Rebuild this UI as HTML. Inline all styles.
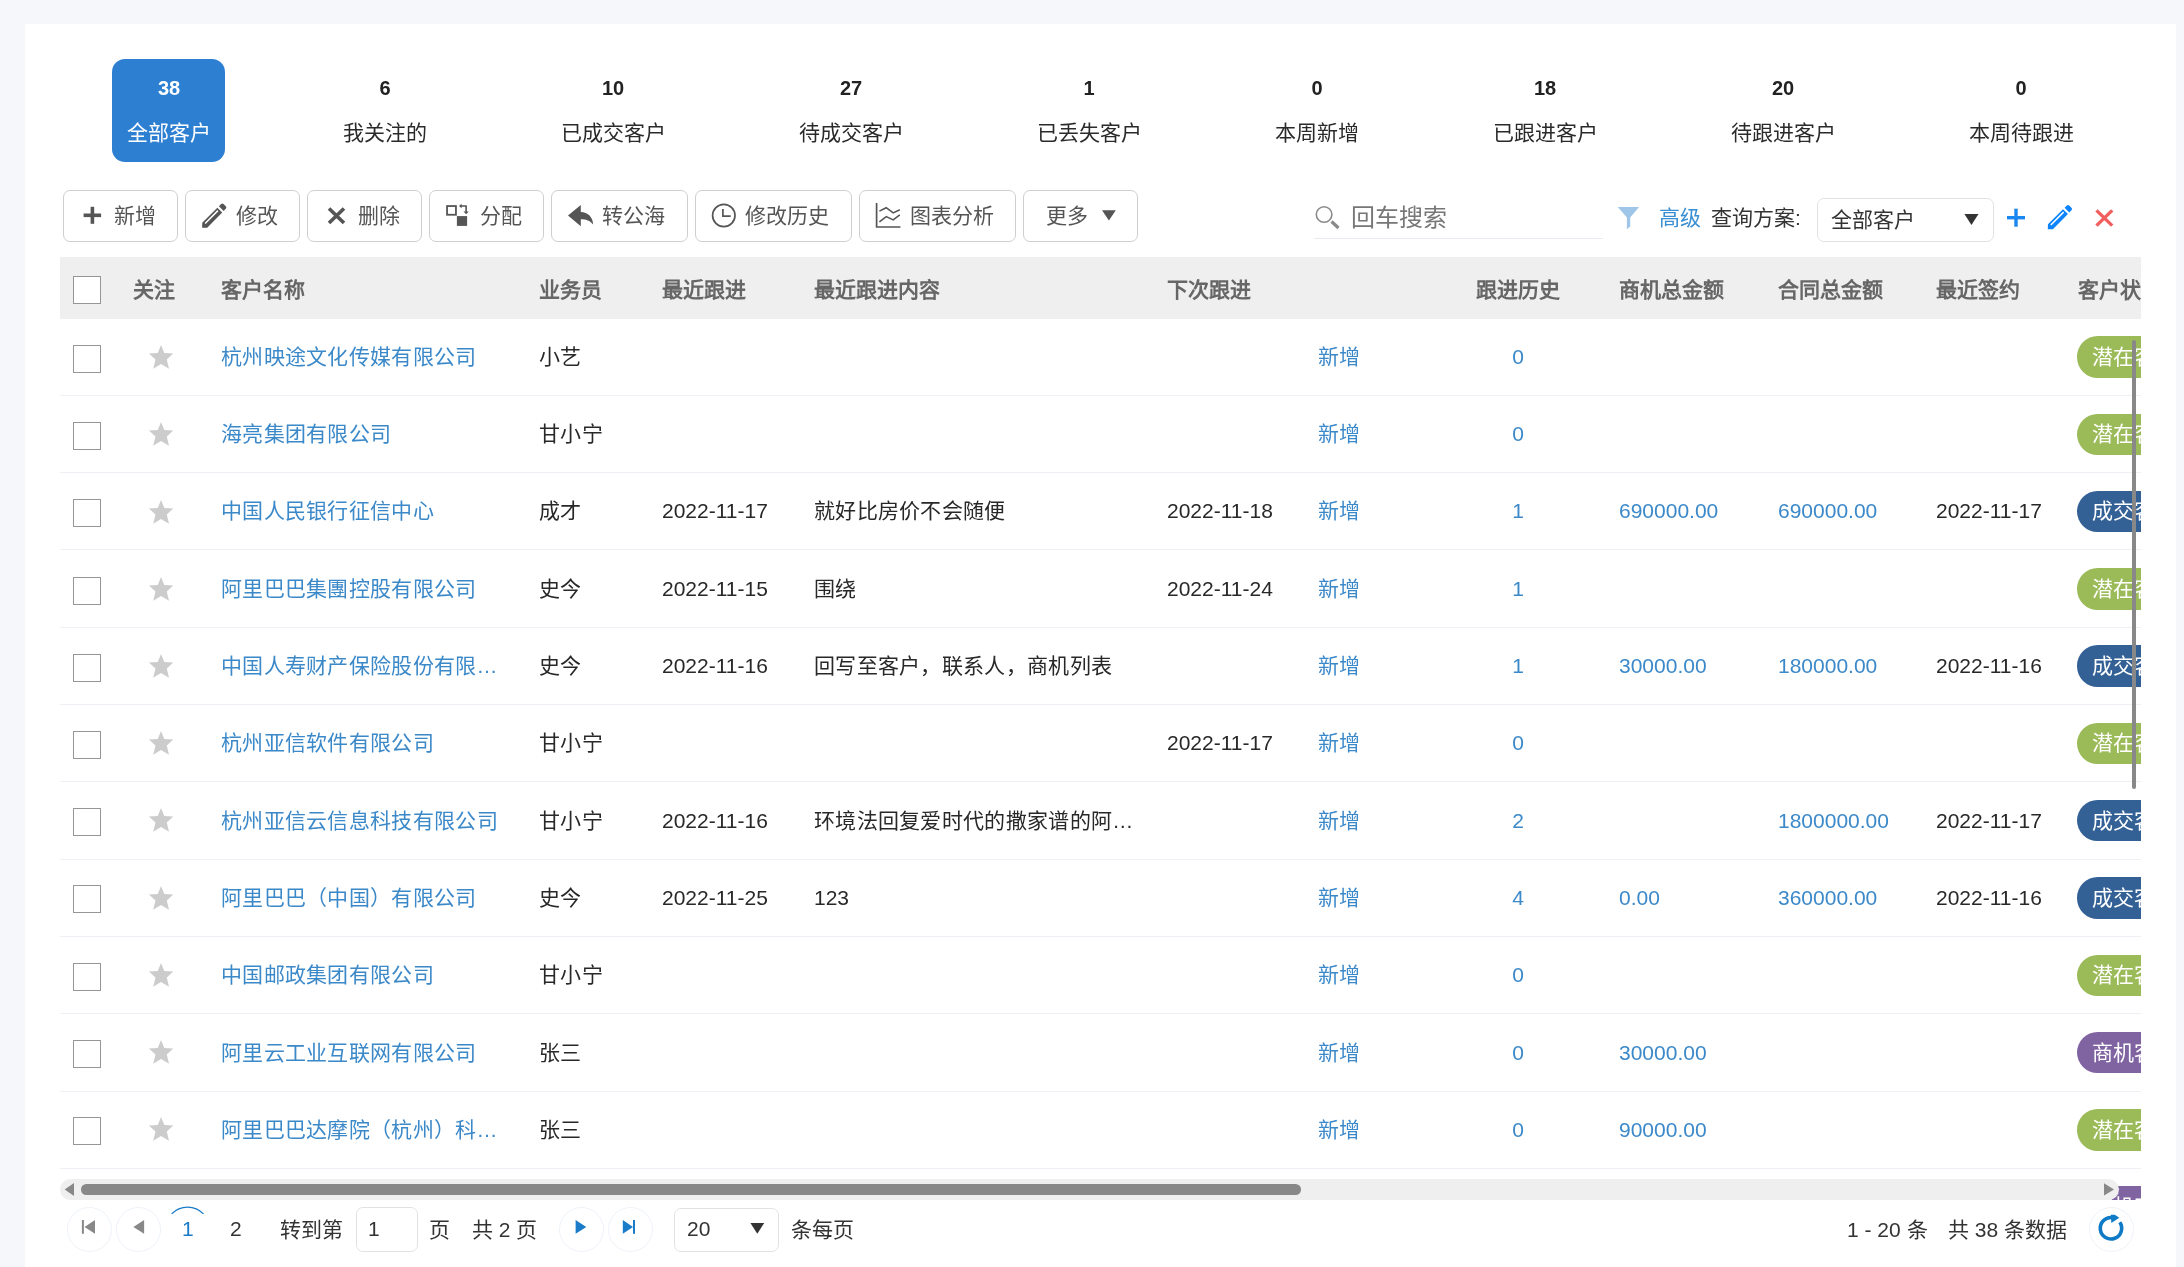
<!DOCTYPE html><html lang="zh-CN"><head><meta charset="utf-8"><style>
html,body{margin:0;padding:0;}
body{width:2184px;height:1267px;overflow:hidden;background:#f5f7fb;position:relative;font-family:"Liberation Sans", sans-serif;}
.card{position:absolute;left:25px;top:24px;width:2151px;height:1260px;background:#fff;}
.t{position:absolute;white-space:nowrap;will-change:transform;}
.abs{position:absolute;}
.btn{position:absolute;top:190px;height:50px;border:1px solid #cfcfcf;border-radius:7px;box-sizing:border-box;width:114px;height:52px;background:#fff;}
.cb{position:absolute;left:73px;width:28px;height:28px;box-sizing:border-box;border:1.5px solid #969696;background:#fff;}
.tag{position:absolute;left:2077px;width:120px;height:41.5px;border-radius:20.75px 0 0 20.75px;}
.circ{position:absolute;top:1207px;width:45px;height:45px;border-radius:50%;box-sizing:border-box;border:1px solid #edf2f8;}
</style></head><body>
<div class="card"></div>

<div class="abs" style="left:112px;top:59px;width:113px;height:103px;background:#2d7fd2;border-radius:13px;"></div>
<div class="t" style="left:68.5px;width:200px;text-align:center;top:68px;height:40px;line-height:40px;font-size:20px;color:#fff;font-weight:bold">38</div>
<div class="t" style="left:68.5px;width:200px;text-align:center;top:111.5px;height:42px;line-height:42px;font-size:21px;color:#fff;font-weight:normal">全部客户</div>
<div class="t" style="left:285.0px;width:200px;text-align:center;top:68px;height:40px;line-height:40px;font-size:20px;color:#222;font-weight:bold">6</div>
<div class="t" style="left:285.0px;width:200px;text-align:center;top:111.5px;height:42px;line-height:42px;font-size:21px;color:#2a2a2a;font-weight:normal">我关注的</div>
<div class="t" style="left:513.0px;width:200px;text-align:center;top:68px;height:40px;line-height:40px;font-size:20px;color:#222;font-weight:bold">10</div>
<div class="t" style="left:513.0px;width:200px;text-align:center;top:111.5px;height:42px;line-height:42px;font-size:21px;color:#2a2a2a;font-weight:normal">已成交客户</div>
<div class="t" style="left:751.0px;width:200px;text-align:center;top:68px;height:40px;line-height:40px;font-size:20px;color:#222;font-weight:bold">27</div>
<div class="t" style="left:751.0px;width:200px;text-align:center;top:111.5px;height:42px;line-height:42px;font-size:21px;color:#2a2a2a;font-weight:normal">待成交客户</div>
<div class="t" style="left:989.0px;width:200px;text-align:center;top:68px;height:40px;line-height:40px;font-size:20px;color:#222;font-weight:bold">1</div>
<div class="t" style="left:989.0px;width:200px;text-align:center;top:111.5px;height:42px;line-height:42px;font-size:21px;color:#2a2a2a;font-weight:normal">已丢失客户</div>
<div class="t" style="left:1217.0px;width:200px;text-align:center;top:68px;height:40px;line-height:40px;font-size:20px;color:#222;font-weight:bold">0</div>
<div class="t" style="left:1217.0px;width:200px;text-align:center;top:111.5px;height:42px;line-height:42px;font-size:21px;color:#2a2a2a;font-weight:normal">本周新增</div>
<div class="t" style="left:1445.0px;width:200px;text-align:center;top:68px;height:40px;line-height:40px;font-size:20px;color:#222;font-weight:bold">18</div>
<div class="t" style="left:1445.0px;width:200px;text-align:center;top:111.5px;height:42px;line-height:42px;font-size:21px;color:#2a2a2a;font-weight:normal">已跟进客户</div>
<div class="t" style="left:1683.0px;width:200px;text-align:center;top:68px;height:40px;line-height:40px;font-size:20px;color:#222;font-weight:bold">20</div>
<div class="t" style="left:1683.0px;width:200px;text-align:center;top:111.5px;height:42px;line-height:42px;font-size:21px;color:#2a2a2a;font-weight:normal">待跟进客户</div>
<div class="t" style="left:1921.0px;width:200px;text-align:center;top:68px;height:40px;line-height:40px;font-size:20px;color:#222;font-weight:bold">0</div>
<div class="t" style="left:1921.0px;width:200px;text-align:center;top:111.5px;height:42px;line-height:42px;font-size:21px;color:#2a2a2a;font-weight:normal">本周待跟进</div>
<div class="btn" style="left:63px;width:115px;"></div>
<div class="btn" style="left:185px;width:115px;"></div>
<div class="btn" style="left:307px;width:115px;"></div>
<div class="btn" style="left:429px;width:115px;"></div>
<div class="btn" style="left:551px;width:137px;"></div>
<div class="btn" style="left:695px;width:157px;"></div>
<div class="btn" style="left:859px;width:157px;"></div>
<div class="btn" style="left:1023px;width:115px;"></div>
<svg class="abs" style="left:0;top:0" width="2184" height="260" viewBox="0 0 2184 260"><rect x="83.6" y="213.5" width="17.5" height="3.6" fill="#555"/><rect x="90.6" y="206.8" width="3.6" height="17" fill="#555"/><g transform="translate(202.1 227.8) rotate(-45)" fill="#555"><path fill-rule="evenodd" d="M0 0 L3.7 -3.5 L25 -3.5 L25 3.5 L3.7 3.5 Z M5.2 -1.7 L23.3 -1.7 L23.3 -0.2 L5.2 -0.2 Z"/><path d="M27.1 -3.3 L30.2 -3.3 Q31.9 -3.3 31.9 -1.6 L31.9 1.6 Q31.9 3.3 30.2 3.3 L27.1 3.3 Z"/></g><path d="M329 208.5 L344 223 M344 208.5 L329 223" stroke="#555" stroke-width="3.6" stroke-linecap="butt"/><rect x="447.05" y="206.05" width="8.9" height="8.7" fill="none" stroke="#555" stroke-width="1.8"/><rect x="456.9" y="216.1" width="10.2" height="9.8" fill="#555"/><path d="M460.8 206 L466.1 206 L466.1 212" fill="none" stroke="#555" stroke-width="1.6"/><path d="M459 206 L461.6 203.8 L461.6 208.3 Z" fill="#555"/><path d="M463.5 211.4 L468.8 211.4 L466.15 214.3 Z" fill="#555"/><path d="M568 215.6 L580.8 204.9 L580.8 212 C587.5 212.3 592.8 216.5 593.2 224.6 C590 220.6 586 219.3 580.8 219.3 L580.8 226.2 Z" fill="#555"/><circle cx="723.8" cy="215.5" r="11.2" fill="none" stroke="#555" stroke-width="1.7"/><path d="M722.9 209 L722.9 216.2 L730.7 216.2" fill="none" stroke="#555" stroke-width="1.7"/><path d="M876.6 203.1 L876.6 227 L900.4 227" fill="none" stroke="#555" stroke-width="1.7"/><path d="M879.4 211.1 L886.2 207.7 L893.2 212.9 L899.8 209.8 M879.4 221.9 L886.3 216.6 L893.2 219.9 L899.8 214.8" fill="none" stroke="#555" stroke-width="1.6"/><path d="M1102 210.2 L1115.8 210.2 L1108.9 220.5 Z" fill="#555"/><circle cx="1324.1" cy="214.5" r="7.8" fill="none" stroke="#8a8a8a" stroke-width="1.6"/><path d="M1331.5 221.5 L1338.5 228" stroke="#8a8a8a" stroke-width="3.2"/><rect x="1314" y="238" width="289" height="1" fill="#e9ebf0"/><path d="M1617.8 206.9 L1639.1 206.9 L1630.2 217.6 L1630.2 226.5 L1626.9 229.3 L1626.9 217.6 Z" fill="#9fc6e8"/><path d="M1964.4 214 L1978.5 214 L1971.45 225 Z" fill="#333"/><rect x="2007" y="216" width="18" height="3.4" fill="#1a86f0"/><rect x="2014.3" y="208.7" width="3.4" height="18" fill="#1a86f0"/><g transform="translate(2047.8 229.3) rotate(-45)" fill="#0d84fb"><path fill-rule="evenodd" d="M0 0 L3.7 -3.5 L25 -3.5 L25 3.5 L3.7 3.5 Z M5.2 -1.7 L23.3 -1.7 L23.3 -0.2 L5.2 -0.2 Z"/><path d="M27.1 -3.3 L30.2 -3.3 Q31.9 -3.3 31.9 -1.6 L31.9 1.6 Q31.9 3.3 30.2 3.3 L27.1 3.3 Z"/></g><path d="M2096.5 210.4 L2112.2 225.6 M2112.2 210.4 L2096.5 225.6" stroke="#f25f5f" stroke-width="3.4"/></svg>
<div class="t" style="left:113.9px;top:194.5px;height:42px;line-height:42px;font-size:21px;color:#555;font-weight:normal;">新增</div>
<div class="t" style="left:236px;top:194.5px;height:42px;line-height:42px;font-size:21px;color:#555;font-weight:normal;">修改</div>
<div class="t" style="left:357.7px;top:194.5px;height:42px;line-height:42px;font-size:21px;color:#555;font-weight:normal;">删除</div>
<div class="t" style="left:479.8px;top:194.5px;height:42px;line-height:42px;font-size:21px;color:#555;font-weight:normal;">分配</div>
<div class="t" style="left:601.9px;top:194.5px;height:42px;line-height:42px;font-size:21px;color:#555;font-weight:normal;">转公海</div>
<div class="t" style="left:744.7px;top:194.5px;height:42px;line-height:42px;font-size:21px;color:#555;font-weight:normal;">修改历史</div>
<div class="t" style="left:910.4px;top:194.5px;height:42px;line-height:42px;font-size:21px;color:#555;font-weight:normal;">图表分析</div>
<div class="t" style="left:1045.7px;top:194.5px;height:42px;line-height:42px;font-size:21px;color:#555;font-weight:normal;">更多</div>
<div class="t" style="left:1351px;top:194px;height:48px;line-height:48px;font-size:24px;color:#777;font-weight:normal;">回车搜索</div>
<div class="t" style="left:1659px;top:197px;height:42px;line-height:42px;font-size:21px;color:#3a8fd3;font-weight:normal;">高级</div>
<div class="t" style="left:1711.4px;top:197px;height:42px;line-height:42px;font-size:21px;color:#333;font-weight:normal;">查询方案:</div>
<div class="abs" style="left:1817px;top:198px;width:177px;height:44px;box-sizing:border-box;border:1px solid #e2e2e2;border-radius:7px;"></div>
<div class="t" style="left:1830.8px;top:199px;height:42px;line-height:42px;font-size:21px;color:#333;font-weight:normal;">全部客户</div>
<div class="abs" style="left:60px;top:257px;width:2081px;height:62px;background:#efefef;"></div>
<div class="cb" style="top:276px;"></div>
<div class="t" style="left:132.8px;top:268.5px;height:42px;line-height:42px;font-size:21px;color:#666;font-weight:bold;">关注</div>
<div class="t" style="left:221.2px;top:268.5px;height:42px;line-height:42px;font-size:21px;color:#666;font-weight:bold;">客户名称</div>
<div class="t" style="left:538.5px;top:268.5px;height:42px;line-height:42px;font-size:21px;color:#666;font-weight:bold;">业务员</div>
<div class="t" style="left:662px;top:268.5px;height:42px;line-height:42px;font-size:21px;color:#666;font-weight:bold;">最近跟进</div>
<div class="t" style="left:814px;top:268.5px;height:42px;line-height:42px;font-size:21px;color:#666;font-weight:bold;">最近跟进内容</div>
<div class="t" style="left:1167.2px;top:268.5px;height:42px;line-height:42px;font-size:21px;color:#666;font-weight:bold;">下次跟进</div>
<div class="t" style="left:1475.5px;top:268.5px;height:42px;line-height:42px;font-size:21px;color:#666;font-weight:bold;">跟进历史</div>
<div class="t" style="left:1619.3px;top:268.5px;height:42px;line-height:42px;font-size:21px;color:#666;font-weight:bold;">商机总金额</div>
<div class="t" style="left:1777.8px;top:268.5px;height:42px;line-height:42px;font-size:21px;color:#666;font-weight:bold;">合同总金额</div>
<div class="t" style="left:1936.4px;top:268.5px;height:42px;line-height:42px;font-size:21px;color:#666;font-weight:bold;">最近签约</div>
<div class="t" style="left:2077.8px;top:268.5px;height:42px;line-height:42px;font-size:21px;color:#666;font-weight:bold;">客户状</div>
<div class="abs" style="left:60px;top:319px;width:2081px;height:881px;overflow:hidden;">
<div class="abs" style="left:0;top:75.5px;width:2081px;height:1px;background:#edf0f5;"></div>
<div class="cb" style="left:13px;top:26.0px;"></div>
<svg class="abs" style="left:87.6px;top:25.100000000000023px" width="26" height="26" viewBox="-13 -13 26 26"><path d="M0 -12.1 L3.3 -4.1 L12.2 -3.6 L5.8 2.6 L8 11.8 L0 7.1 L-7.8 11.8 L-5.5 2.6 L-12.1 -3.6 L-3.2 -4.1 Z" fill="#cccccc"/></svg>
<div class="t" style="left:161.2px;top:16.600000000000023px;height:42px;line-height:42px;font-size:21px;color:#3c89c9;letter-spacing:0.3px">杭州映途文化传媒有限公司</div>
<div class="t" style="left:478.5px;top:16.600000000000023px;height:42px;line-height:42px;font-size:21px;color:#282828;letter-spacing:0.3px">小艺</div>
<div class="t" style="left:1258.3px;top:16.600000000000023px;height:42px;line-height:42px;font-size:21px;color:#3c89c9;letter-spacing:0.3px">新增</div>
<div class="t" style="left:1407.5px;width:100px;text-align:center;top:16.600000000000023px;height:42px;line-height:42px;font-size:21px;color:#3c89c9;">0</div>
<div class="tag" style="left:2017px;top:17.30000000000001px;background:#9bbb59;"></div>
<div class="t" style="left:2032px;top:16.600000000000023px;height:42px;line-height:42px;font-size:21px;color:#fff;">潜在客户</div>
<div class="abs" style="left:0;top:152.84500000000003px;width:2081px;height:1px;background:#edf0f5;"></div>
<div class="cb" style="left:13px;top:103.19999999999999px;"></div>
<svg class="abs" style="left:87.6px;top:102.30000000000001px" width="26" height="26" viewBox="-13 -13 26 26"><path d="M0 -12.1 L3.3 -4.1 L12.2 -3.6 L5.8 2.6 L8 11.8 L0 7.1 L-7.8 11.8 L-5.5 2.6 L-12.1 -3.6 L-3.2 -4.1 Z" fill="#cccccc"/></svg>
<div class="t" style="left:161.2px;top:93.94500000000005px;height:42px;line-height:42px;font-size:21px;color:#3c89c9;letter-spacing:0.3px">海亮集团有限公司</div>
<div class="t" style="left:478.5px;top:93.94500000000005px;height:42px;line-height:42px;font-size:21px;color:#282828;letter-spacing:0.3px">甘小宁</div>
<div class="t" style="left:1258.3px;top:93.94500000000005px;height:42px;line-height:42px;font-size:21px;color:#3c89c9;letter-spacing:0.3px">新增</div>
<div class="t" style="left:1407.5px;width:100px;text-align:center;top:93.94500000000005px;height:42px;line-height:42px;font-size:21px;color:#3c89c9;">0</div>
<div class="tag" style="left:2017px;top:94.58000000000004px;background:#9bbb59;"></div>
<div class="t" style="left:2032px;top:93.94500000000005px;height:42px;line-height:42px;font-size:21px;color:#fff;">潜在客户</div>
<div class="abs" style="left:0;top:230.19000000000005px;width:2081px;height:1px;background:#edf0f5;"></div>
<div class="cb" style="left:13px;top:180.39999999999998px;"></div>
<svg class="abs" style="left:87.6px;top:179.5px" width="26" height="26" viewBox="-13 -13 26 26"><path d="M0 -12.1 L3.3 -4.1 L12.2 -3.6 L5.8 2.6 L8 11.8 L0 7.1 L-7.8 11.8 L-5.5 2.6 L-12.1 -3.6 L-3.2 -4.1 Z" fill="#cccccc"/></svg>
<div class="t" style="left:161.2px;top:171.29000000000008px;height:42px;line-height:42px;font-size:21px;color:#3c89c9;letter-spacing:0.3px">中国人民银行征信中心</div>
<div class="t" style="left:478.5px;top:171.29000000000008px;height:42px;line-height:42px;font-size:21px;color:#282828;letter-spacing:0.3px">成才</div>
<div class="t" style="left:602px;top:171.29000000000008px;height:42px;line-height:42px;font-size:21px;color:#282828;letter-spacing:0px">2022-11-17</div>
<div class="t" style="left:754px;top:171.29000000000008px;height:42px;line-height:42px;font-size:21px;color:#282828;letter-spacing:0.3px">就好比房价不会随便</div>
<div class="t" style="left:1107.2px;top:171.29000000000008px;height:42px;line-height:42px;font-size:21px;color:#282828;letter-spacing:0px">2022-11-18</div>
<div class="t" style="left:1258.3px;top:171.29000000000008px;height:42px;line-height:42px;font-size:21px;color:#3c89c9;letter-spacing:0.3px">新增</div>
<div class="t" style="left:1407.5px;width:100px;text-align:center;top:171.29000000000008px;height:42px;line-height:42px;font-size:21px;color:#3c89c9;">1</div>
<div class="t" style="left:1559.3px;top:171.29000000000008px;height:42px;line-height:42px;font-size:21px;color:#3c89c9;letter-spacing:0px">690000.00</div>
<div class="t" style="left:1717.8px;top:171.29000000000008px;height:42px;line-height:42px;font-size:21px;color:#3c89c9;letter-spacing:0px">690000.00</div>
<div class="t" style="left:1876.4px;top:171.29000000000008px;height:42px;line-height:42px;font-size:21px;color:#282828;letter-spacing:0px">2022-11-17</div>
<div class="tag" style="left:2017px;top:171.86px;background:#336195;"></div>
<div class="t" style="left:2032px;top:171.29000000000008px;height:42px;line-height:42px;font-size:21px;color:#fff;">成交客户</div>
<div class="abs" style="left:0;top:307.53499999999997px;width:2081px;height:1px;background:#edf0f5;"></div>
<div class="cb" style="left:13px;top:257.6px;"></div>
<svg class="abs" style="left:87.6px;top:256.70000000000005px" width="26" height="26" viewBox="-13 -13 26 26"><path d="M0 -12.1 L3.3 -4.1 L12.2 -3.6 L5.8 2.6 L8 11.8 L0 7.1 L-7.8 11.8 L-5.5 2.6 L-12.1 -3.6 L-3.2 -4.1 Z" fill="#cccccc"/></svg>
<div class="t" style="left:161.2px;top:248.635px;height:42px;line-height:42px;font-size:21px;color:#3c89c9;letter-spacing:0.3px">阿里巴巴集團控股有限公司</div>
<div class="t" style="left:478.5px;top:248.635px;height:42px;line-height:42px;font-size:21px;color:#282828;letter-spacing:0.3px">史今</div>
<div class="t" style="left:602px;top:248.635px;height:42px;line-height:42px;font-size:21px;color:#282828;letter-spacing:0px">2022-11-15</div>
<div class="t" style="left:754px;top:248.635px;height:42px;line-height:42px;font-size:21px;color:#282828;letter-spacing:0.3px">围绕</div>
<div class="t" style="left:1107.2px;top:248.635px;height:42px;line-height:42px;font-size:21px;color:#282828;letter-spacing:0px">2022-11-24</div>
<div class="t" style="left:1258.3px;top:248.635px;height:42px;line-height:42px;font-size:21px;color:#3c89c9;letter-spacing:0.3px">新增</div>
<div class="t" style="left:1407.5px;width:100px;text-align:center;top:248.635px;height:42px;line-height:42px;font-size:21px;color:#3c89c9;">1</div>
<div class="tag" style="left:2017px;top:249.14px;background:#9bbb59;"></div>
<div class="t" style="left:2032px;top:248.635px;height:42px;line-height:42px;font-size:21px;color:#fff;">潜在客户</div>
<div class="abs" style="left:0;top:384.88px;width:2081px;height:1px;background:#edf0f5;"></div>
<div class="cb" style="left:13px;top:334.79999999999995px;"></div>
<svg class="abs" style="left:87.6px;top:333.9px" width="26" height="26" viewBox="-13 -13 26 26"><path d="M0 -12.1 L3.3 -4.1 L12.2 -3.6 L5.8 2.6 L8 11.8 L0 7.1 L-7.8 11.8 L-5.5 2.6 L-12.1 -3.6 L-3.2 -4.1 Z" fill="#cccccc"/></svg>
<div class="t" style="left:161.2px;top:325.98px;height:42px;line-height:42px;font-size:21px;color:#3c89c9;letter-spacing:0.3px">中国人寿财产保险股份有限…</div>
<div class="t" style="left:478.5px;top:325.98px;height:42px;line-height:42px;font-size:21px;color:#282828;letter-spacing:0.3px">史今</div>
<div class="t" style="left:602px;top:325.98px;height:42px;line-height:42px;font-size:21px;color:#282828;letter-spacing:0px">2022-11-16</div>
<div class="t" style="left:754px;top:325.98px;height:42px;line-height:42px;font-size:21px;color:#282828;letter-spacing:0.3px">回写至客户，联系人，商机列表</div>
<div class="t" style="left:1258.3px;top:325.98px;height:42px;line-height:42px;font-size:21px;color:#3c89c9;letter-spacing:0.3px">新增</div>
<div class="t" style="left:1407.5px;width:100px;text-align:center;top:325.98px;height:42px;line-height:42px;font-size:21px;color:#3c89c9;">1</div>
<div class="t" style="left:1559.3px;top:325.98px;height:42px;line-height:42px;font-size:21px;color:#3c89c9;letter-spacing:0px">30000.00</div>
<div class="t" style="left:1717.8px;top:325.98px;height:42px;line-height:42px;font-size:21px;color:#3c89c9;letter-spacing:0px">180000.00</div>
<div class="t" style="left:1876.4px;top:325.98px;height:42px;line-height:42px;font-size:21px;color:#282828;letter-spacing:0px">2022-11-16</div>
<div class="tag" style="left:2017px;top:326.4200000000001px;background:#336195;"></div>
<div class="t" style="left:2032px;top:325.98px;height:42px;line-height:42px;font-size:21px;color:#fff;">成交客户</div>
<div class="abs" style="left:0;top:462.225px;width:2081px;height:1px;background:#edf0f5;"></div>
<div class="cb" style="left:13px;top:412.0px;"></div>
<svg class="abs" style="left:87.6px;top:411.1px" width="26" height="26" viewBox="-13 -13 26 26"><path d="M0 -12.1 L3.3 -4.1 L12.2 -3.6 L5.8 2.6 L8 11.8 L0 7.1 L-7.8 11.8 L-5.5 2.6 L-12.1 -3.6 L-3.2 -4.1 Z" fill="#cccccc"/></svg>
<div class="t" style="left:161.2px;top:403.32500000000005px;height:42px;line-height:42px;font-size:21px;color:#3c89c9;letter-spacing:0.3px">杭州亚信软件有限公司</div>
<div class="t" style="left:478.5px;top:403.32500000000005px;height:42px;line-height:42px;font-size:21px;color:#282828;letter-spacing:0.3px">甘小宁</div>
<div class="t" style="left:1107.2px;top:403.32500000000005px;height:42px;line-height:42px;font-size:21px;color:#282828;letter-spacing:0px">2022-11-17</div>
<div class="t" style="left:1258.3px;top:403.32500000000005px;height:42px;line-height:42px;font-size:21px;color:#3c89c9;letter-spacing:0.3px">新增</div>
<div class="t" style="left:1407.5px;width:100px;text-align:center;top:403.32500000000005px;height:42px;line-height:42px;font-size:21px;color:#3c89c9;">0</div>
<div class="tag" style="left:2017px;top:403.70000000000005px;background:#9bbb59;"></div>
<div class="t" style="left:2032px;top:403.32500000000005px;height:42px;line-height:42px;font-size:21px;color:#fff;">潜在客户</div>
<div class="abs" style="left:0;top:539.5699999999999px;width:2081px;height:1px;background:#edf0f5;"></div>
<div class="cb" style="left:13px;top:489.20000000000005px;"></div>
<svg class="abs" style="left:87.6px;top:488.30000000000007px" width="26" height="26" viewBox="-13 -13 26 26"><path d="M0 -12.1 L3.3 -4.1 L12.2 -3.6 L5.8 2.6 L8 11.8 L0 7.1 L-7.8 11.8 L-5.5 2.6 L-12.1 -3.6 L-3.2 -4.1 Z" fill="#cccccc"/></svg>
<div class="t" style="left:161.2px;top:480.66999999999996px;height:42px;line-height:42px;font-size:21px;color:#3c89c9;letter-spacing:0.3px">杭州亚信云信息科技有限公司</div>
<div class="t" style="left:478.5px;top:480.66999999999996px;height:42px;line-height:42px;font-size:21px;color:#282828;letter-spacing:0.3px">甘小宁</div>
<div class="t" style="left:602px;top:480.66999999999996px;height:42px;line-height:42px;font-size:21px;color:#282828;letter-spacing:0px">2022-11-16</div>
<div class="t" style="left:754px;top:480.66999999999996px;height:42px;line-height:42px;font-size:21px;color:#282828;letter-spacing:0.3px">环境法回复爱时代的撒家谱的阿…</div>
<div class="t" style="left:1258.3px;top:480.66999999999996px;height:42px;line-height:42px;font-size:21px;color:#3c89c9;letter-spacing:0.3px">新增</div>
<div class="t" style="left:1407.5px;width:100px;text-align:center;top:480.66999999999996px;height:42px;line-height:42px;font-size:21px;color:#3c89c9;">2</div>
<div class="t" style="left:1717.8px;top:480.66999999999996px;height:42px;line-height:42px;font-size:21px;color:#3c89c9;letter-spacing:0px">1800000.00</div>
<div class="t" style="left:1876.4px;top:480.66999999999996px;height:42px;line-height:42px;font-size:21px;color:#282828;letter-spacing:0px">2022-11-17</div>
<div class="tag" style="left:2017px;top:480.98px;background:#336195;"></div>
<div class="t" style="left:2032px;top:480.66999999999996px;height:42px;line-height:42px;font-size:21px;color:#fff;">成交客户</div>
<div class="abs" style="left:0;top:616.915px;width:2081px;height:1px;background:#edf0f5;"></div>
<div class="cb" style="left:13px;top:566.4px;"></div>
<svg class="abs" style="left:87.6px;top:565.5px" width="26" height="26" viewBox="-13 -13 26 26"><path d="M0 -12.1 L3.3 -4.1 L12.2 -3.6 L5.8 2.6 L8 11.8 L0 7.1 L-7.8 11.8 L-5.5 2.6 L-12.1 -3.6 L-3.2 -4.1 Z" fill="#cccccc"/></svg>
<div class="t" style="left:161.2px;top:558.015px;height:42px;line-height:42px;font-size:21px;color:#3c89c9;letter-spacing:0.3px">阿里巴巴（中国）有限公司</div>
<div class="t" style="left:478.5px;top:558.015px;height:42px;line-height:42px;font-size:21px;color:#282828;letter-spacing:0.3px">史今</div>
<div class="t" style="left:602px;top:558.015px;height:42px;line-height:42px;font-size:21px;color:#282828;letter-spacing:0px">2022-11-25</div>
<div class="t" style="left:754px;top:558.015px;height:42px;line-height:42px;font-size:21px;color:#282828;letter-spacing:0px">123</div>
<div class="t" style="left:1258.3px;top:558.015px;height:42px;line-height:42px;font-size:21px;color:#3c89c9;letter-spacing:0.3px">新增</div>
<div class="t" style="left:1407.5px;width:100px;text-align:center;top:558.015px;height:42px;line-height:42px;font-size:21px;color:#3c89c9;">4</div>
<div class="t" style="left:1559.3px;top:558.015px;height:42px;line-height:42px;font-size:21px;color:#3c89c9;letter-spacing:0px">0.00</div>
<div class="t" style="left:1717.8px;top:558.015px;height:42px;line-height:42px;font-size:21px;color:#3c89c9;letter-spacing:0px">360000.00</div>
<div class="t" style="left:1876.4px;top:558.015px;height:42px;line-height:42px;font-size:21px;color:#282828;letter-spacing:0px">2022-11-16</div>
<div class="tag" style="left:2017px;top:558.26px;background:#336195;"></div>
<div class="t" style="left:2032px;top:558.015px;height:42px;line-height:42px;font-size:21px;color:#fff;">成交客户</div>
<div class="abs" style="left:0;top:694.26px;width:2081px;height:1px;background:#edf0f5;"></div>
<div class="cb" style="left:13px;top:643.6px;"></div>
<svg class="abs" style="left:87.6px;top:642.7px" width="26" height="26" viewBox="-13 -13 26 26"><path d="M0 -12.1 L3.3 -4.1 L12.2 -3.6 L5.8 2.6 L8 11.8 L0 7.1 L-7.8 11.8 L-5.5 2.6 L-12.1 -3.6 L-3.2 -4.1 Z" fill="#cccccc"/></svg>
<div class="t" style="left:161.2px;top:635.36px;height:42px;line-height:42px;font-size:21px;color:#3c89c9;letter-spacing:0.3px">中国邮政集团有限公司</div>
<div class="t" style="left:478.5px;top:635.36px;height:42px;line-height:42px;font-size:21px;color:#282828;letter-spacing:0.3px">甘小宁</div>
<div class="t" style="left:1258.3px;top:635.36px;height:42px;line-height:42px;font-size:21px;color:#3c89c9;letter-spacing:0.3px">新增</div>
<div class="t" style="left:1407.5px;width:100px;text-align:center;top:635.36px;height:42px;line-height:42px;font-size:21px;color:#3c89c9;">0</div>
<div class="tag" style="left:2017px;top:635.54px;background:#9bbb59;"></div>
<div class="t" style="left:2032px;top:635.36px;height:42px;line-height:42px;font-size:21px;color:#fff;">潜在客户</div>
<div class="abs" style="left:0;top:771.605px;width:2081px;height:1px;background:#edf0f5;"></div>
<div class="cb" style="left:13px;top:720.8000000000002px;"></div>
<svg class="abs" style="left:87.6px;top:719.9000000000001px" width="26" height="26" viewBox="-13 -13 26 26"><path d="M0 -12.1 L3.3 -4.1 L12.2 -3.6 L5.8 2.6 L8 11.8 L0 7.1 L-7.8 11.8 L-5.5 2.6 L-12.1 -3.6 L-3.2 -4.1 Z" fill="#cccccc"/></svg>
<div class="t" style="left:161.2px;top:712.7049999999999px;height:42px;line-height:42px;font-size:21px;color:#3c89c9;letter-spacing:0.3px">阿里云工业互联网有限公司</div>
<div class="t" style="left:478.5px;top:712.7049999999999px;height:42px;line-height:42px;font-size:21px;color:#282828;letter-spacing:0.3px">张三</div>
<div class="t" style="left:1258.3px;top:712.7049999999999px;height:42px;line-height:42px;font-size:21px;color:#3c89c9;letter-spacing:0.3px">新增</div>
<div class="t" style="left:1407.5px;width:100px;text-align:center;top:712.7049999999999px;height:42px;line-height:42px;font-size:21px;color:#3c89c9;">0</div>
<div class="t" style="left:1559.3px;top:712.7049999999999px;height:42px;line-height:42px;font-size:21px;color:#3c89c9;letter-spacing:0px">30000.00</div>
<div class="tag" style="left:2017px;top:712.8199999999999px;background:#8064a2;"></div>
<div class="t" style="left:2032px;top:712.7049999999999px;height:42px;line-height:42px;font-size:21px;color:#fff;">商机客户</div>
<div class="abs" style="left:0;top:848.95px;width:2081px;height:1px;background:#edf0f5;"></div>
<div class="cb" style="left:13px;top:798.0px;"></div>
<svg class="abs" style="left:87.6px;top:797.0999999999999px" width="26" height="26" viewBox="-13 -13 26 26"><path d="M0 -12.1 L3.3 -4.1 L12.2 -3.6 L5.8 2.6 L8 11.8 L0 7.1 L-7.8 11.8 L-5.5 2.6 L-12.1 -3.6 L-3.2 -4.1 Z" fill="#cccccc"/></svg>
<div class="t" style="left:161.2px;top:790.05px;height:42px;line-height:42px;font-size:21px;color:#3c89c9;letter-spacing:0.3px">阿里巴巴达摩院（杭州）科…</div>
<div class="t" style="left:478.5px;top:790.05px;height:42px;line-height:42px;font-size:21px;color:#282828;letter-spacing:0.3px">张三</div>
<div class="t" style="left:1258.3px;top:790.05px;height:42px;line-height:42px;font-size:21px;color:#3c89c9;letter-spacing:0.3px">新增</div>
<div class="t" style="left:1407.5px;width:100px;text-align:center;top:790.05px;height:42px;line-height:42px;font-size:21px;color:#3c89c9;">0</div>
<div class="t" style="left:1559.3px;top:790.05px;height:42px;line-height:42px;font-size:21px;color:#3c89c9;letter-spacing:0px">90000.00</div>
<div class="tag" style="left:2017px;top:790.0999999999999px;background:#9bbb59;"></div>
<div class="t" style="left:2032px;top:790.05px;height:42px;line-height:42px;font-size:21px;color:#fff;">潜在客户</div>
<div class="abs" style="left:0;top:926.2950000000001px;width:2081px;height:1px;background:#edf0f5;"></div>
<div class="tag" style="left:2017px;top:867.3800000000001px;background:#8064a2;"></div>
<div class="t" style="left:2032px;top:867.395px;height:42px;line-height:42px;font-size:21px;color:#fff;">商机客户</div>
</div>
<div class="abs" style="left:2132.2px;top:340px;width:3.6px;height:449px;background:#888;border-radius:2px;"></div>
<div class="abs" style="left:60px;top:1179px;width:2059px;height:21px;background:#efefef;border-radius:10.5px;"></div>
<svg class="abs" style="left:0;top:1170px" width="2184" height="40" viewBox="0 1170 2184 40"><path d="M64.7 1189.5 L74 1183 L74 1196 Z" fill="#888"/><path d="M2114 1189.5 L2104 1183.3 L2104 1195.6 Z" fill="#888"/></svg>
<div class="abs" style="left:81px;top:1184px;width:1220px;height:10.6px;background:#888;border-radius:5.3px;"></div>
<div class="circ" style="left:67px;"></div>
<div class="circ" style="left:116px;"></div>
<div class="circ" style="left:558.5px;"></div>
<div class="circ" style="left:607.5px;"></div>
<div class="circ" style="left:2088.5px;"></div>
<svg class="abs" style="left:0;top:1200px" width="2184" height="67" viewBox="0 1200 2184 67"><rect x="81.9" y="1220" width="2" height="13.8" fill="#888"/><path d="M84.5 1226.9 L95 1220 L95 1233.8 Z" fill="#888"/><path d="M133.4 1226.9 L144.1 1220 L144.1 1233.8 Z" fill="#888"/><path d="M171.6 1213.9 A22 22 0 0 1 203.5 1213.9" fill="none" stroke="#1a7bc9" stroke-width="1.3"/><path d="M586.3 1226.9 L575.6 1220 L575.6 1233.8 Z" fill="#1a7bc9"/><path d="M633 1226.9 L622.8 1220 L622.8 1233.8 Z" fill="#1a7bc9"/><rect x="633" y="1220" width="2" height="13.8" fill="#1a7bc9"/><path d="M750.4 1223 L764.2 1223 L757.3 1233.8 Z" fill="#333"/><path d="M2112 1217.6 A10.7 10.7 0 1 0 2119.8 1222.2" fill="none" stroke="#0f7ac6" stroke-width="3.6"/><path d="M2110.8 1214.8 L2114.8 1214.8 L2119.3 1217.8 L2111.3 1223 Z" fill="#0f7ac6"/></svg>
<div class="t" style="left:181.5px;top:1207.5px;height:42px;line-height:42px;font-size:21px;color:#1a7bc9;font-weight:normal;">1</div>
<div class="t" style="left:230.2px;top:1207.5px;height:42px;line-height:42px;font-size:21px;color:#333;font-weight:normal;">2</div>
<div class="t" style="left:279.9px;top:1208.5px;height:42px;line-height:42px;font-size:21px;color:#333;font-weight:normal;">转到第</div>
<div class="abs" style="left:355.5px;top:1207px;width:62px;height:44.5px;box-sizing:border-box;border:1px solid #e2e2e2;border-radius:7px;"></div>
<div class="t" style="left:368px;top:1207.5px;height:42px;line-height:42px;font-size:21px;color:#333;font-weight:normal;">1</div>
<div class="t" style="left:429px;top:1208.5px;height:42px;line-height:42px;font-size:21px;color:#333;font-weight:normal;">页</div>
<div class="t" style="left:471.5px;top:1208.5px;height:42px;line-height:42px;font-size:21px;color:#333;font-weight:normal;">共 2 页</div>
<div class="abs" style="left:674.2px;top:1207.5px;width:105px;height:44px;box-sizing:border-box;border:1px solid #e2e2e2;border-radius:7px;"></div>
<div class="t" style="left:687px;top:1207.5px;height:42px;line-height:42px;font-size:21px;color:#333;font-weight:normal;">20</div>
<div class="t" style="left:791px;top:1208.5px;height:42px;line-height:42px;font-size:21px;color:#333;font-weight:normal;">条每页</div>
<div class="t" style="left:1847px;top:1208.5px;height:42px;line-height:42px;font-size:21px;color:#333;font-weight:normal;">1 - 20 条</div>
<div class="t" style="left:1947.5px;top:1208.5px;height:42px;line-height:42px;font-size:21px;color:#333;font-weight:normal;">共 38 条数据</div>
</body></html>
